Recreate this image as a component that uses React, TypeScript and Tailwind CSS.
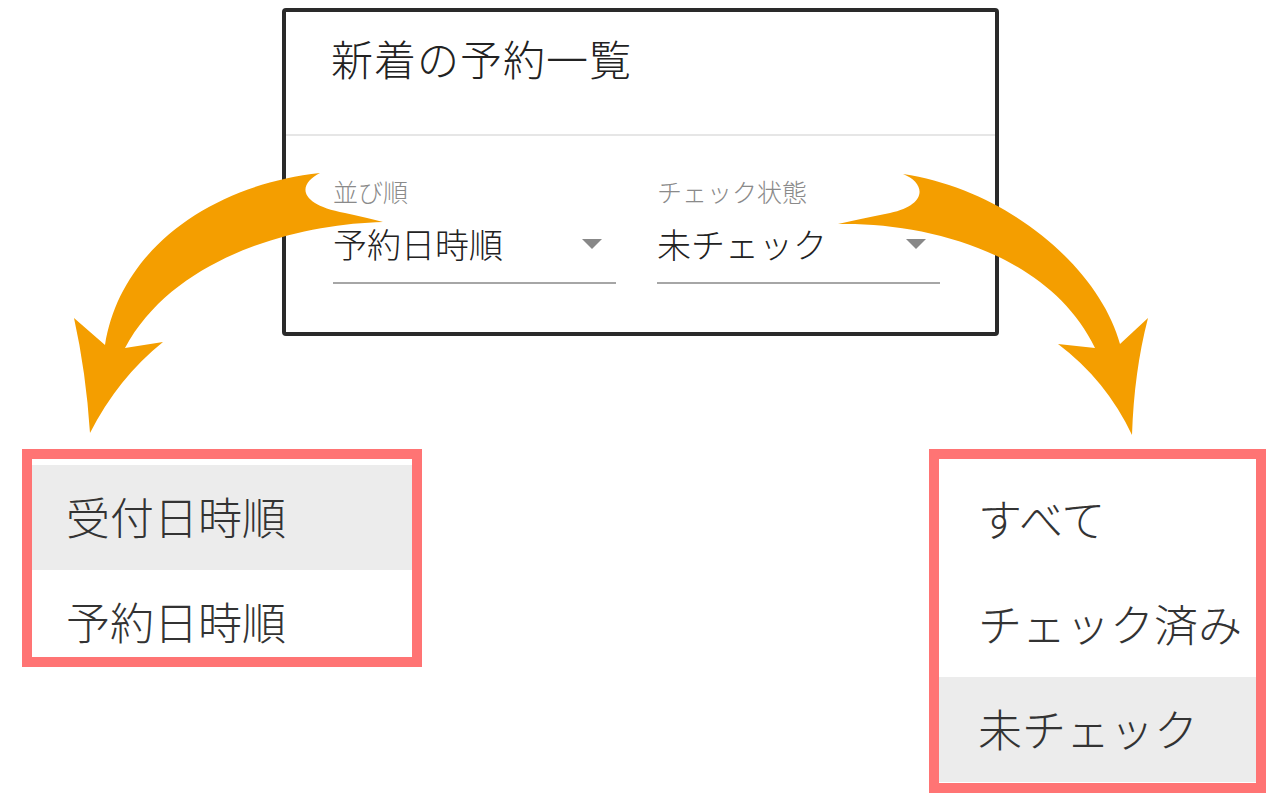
import React from 'react';

const font = { fontFamily: '"Noto Sans CJK JP", "Noto Sans", sans-serif' };

const SelectField: React.FC<{ label: string; value: string }> = ({ label, value }) => (
  <div className="w-[283px]">
    <div className="text-[25px] font-light leading-none text-[#8a8a8a]">{label}</div>
    <div className="mt-[23px] flex items-center justify-between border-b-2 border-[#a6a6a6] pb-[21px] pr-[14px]">
      <span className="text-[34px] font-light leading-none text-[#222]">{value}</span>
      <svg width="20" height="10" viewBox="0 0 20 10">
        <path d="M0 0 H20 L10 10 Z" fill="#888" />
      </svg>
    </div>
  </div>
);

const MenuItem: React.FC<{ text: string; active?: boolean; pad: string }> = ({ text, active, pad }) => (
  <div className={`flex h-[105px] shrink-0 items-center whitespace-nowrap pb-[4px] text-[44px] font-light leading-none text-[#333] ${pad} ${active ? 'bg-[#ececec]' : ''}`}>
    {text}
  </div>
);

const Arrows: React.FC = () => (
  <svg className="pointer-events-none absolute inset-0" width="1280" height="800" viewBox="0 0 1280 800">
    <path
      fill="#f49e00"
      d="M320 173 C298 184 297 204 345 213 Q368 218 383 222 C300 224 175 255 125 348 L163 342 Q118 378 90 433 Q86 372 74 318 L105 345 C120 250 210 185 320 173 Z"
    />
    <path
      fill="#f49e00"
      d="M903 174 C926 183 928 205 890 213 Q860 219 838 224 C930 222 1050 255 1095 348 L1058 344 Q1106 380 1132 435 Q1134 372 1148 318 L1120 344 C1100 270 1010 190 903 174 Z"
    />
  </svg>
);

export default function App() {
  return (
    <div className="relative h-[800px] w-[1280px] overflow-hidden bg-white" style={font}>
      <div className="pl-[282px] pt-[8px]">
        <div className="h-[328px] w-[717px] rounded-[4px] border-4 border-[#2a2a2a] bg-white">
          <div className="h-[122px] pl-[45px] pt-[25px]">
            <h1 className="text-[42px] font-light leading-none tracking-[1px] text-[#222]">新着の予約一覧</h1>
          </div>
          <div className="h-[2px] bg-[#e6e6e6]" />
          <div className="flex gap-[41px] pl-[47px] pt-[43px]">
            <SelectField label="並び順" value="予約日時順" />
            <SelectField label="チェック状態" value="未チェック" />
          </div>
        </div>
      </div>

      <div className="mt-[113px] flex items-start">
        <div className="ml-[22px] flex h-[218px] w-[400px] flex-col overflow-hidden border-[10px] border-[#ff7474] bg-white pt-[6px]">
          <MenuItem text="受付日時順" active pad="pl-[34px]" />
          <MenuItem text="予約日時順" pad="pl-[34px]" />
        </div>
        <div className="ml-auto mr-[14px] flex h-[344px] w-[337px] flex-col overflow-hidden border-[10px] border-[#ff7474] bg-white pt-[8px]">
          <MenuItem text="すべて" pad="pl-[39px]" />
          <MenuItem text="チェック済み" pad="pl-[39px]" />
          <MenuItem text="未チェック" active pad="pl-[39px]" />
        </div>
      </div>

      <Arrows />
    </div>
  );
}
